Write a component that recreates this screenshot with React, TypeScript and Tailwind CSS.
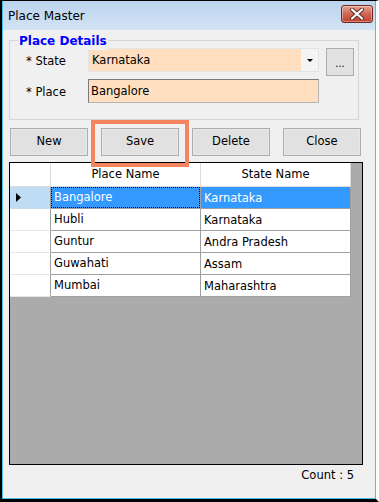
import React from 'react';

const font = { fontFamily: '"DejaVu Sans", Verdana, sans-serif' };

type Row = { place: string; state: string };

const rows: Row[] = [
  { place: 'Bangalore', state: 'Karnataka' },
  { place: 'Hubli', state: 'Karnataka' },
  { place: 'Guntur', state: 'Andra Pradesh' },
  { place: 'Guwahati', state: 'Assam' },
  { place: 'Mumbai', state: 'Maharashtra' },
];

const CloseButton = () => (
  <div className="flex h-[18px] w-[32px] items-center justify-center rounded-[3px] border border-[#6e2a22] bg-gradient-to-b from-[#e4a394] via-[#cf6553] to-[#c0412d] shadow-[inset_0_0_0_1px_rgba(255,255,255,0.35)]">
    <svg width="14" height="12" viewBox="0 0 14 12">
      <path
        d="M2 1.5 L12 10.5 M12 1.5 L2 10.5"
        stroke="#5a2a22"
        strokeWidth="4"
        strokeLinecap="round"
      />
      <path
        d="M2 1.5 L12 10.5 M12 1.5 L2 10.5"
        stroke="#ffffff"
        strokeWidth="2.2"
        strokeLinecap="round"
      />
    </svg>
  </div>
);

const Button = ({ label }: { label: string }) => (
  <button className="flex h-[28px] w-[78px] items-center justify-center border border-[#adadad] bg-[#e1e1e1] text-[11.5px] text-black shadow-[inset_0_0_0_1px_#e8e8e8]">
    {label}
  </button>
);

const RowPointer = () => (
  <svg width="5" height="9" viewBox="0 0 5 9">
    <path d="M0 0 L5 4.5 L0 9 Z" fill="#000" />
  </svg>
);

export default function App() {
  return (
    <div
      className="h-[502px] w-[379px] border-b-[3px] border-l-2 border-r-[3px] border-t border-black border-r-white bg-black text-black"
      style={font}
    >
      <div className="flex h-full flex-col border-b border-l border-r border-[#48bde8] bg-[#f0f0f0]">
        {/* title bar */}
        <div className="flex h-[29px] items-center justify-between bg-gradient-to-b from-[#bcd4ee] to-[#d3e3f4] pl-[5px] pr-[2px]">
          <span className="text-[12px]">Place Master</span>
          <div className="-mt-[4px]">
            <CloseButton />
          </div>
        </div>

        <div className="relative flex flex-1 flex-col pl-[6px]">
          {/* group box */}
          <div className="relative mt-[10px] w-[350px] border border-[#d5d5d5] pb-[16px] pt-[7px]">
            <span className="absolute -top-[9px] left-[8px] bg-[#f0f0f0] px-[1px] text-[12px] font-semibold text-[#0000ff]">
              Place Details
            </span>
            <div className="flex h-[28px] items-start">
              <div className="flex h-[24px] w-[78px] items-center pl-[16px] pt-[4px] text-[11.5px]">
                * State
              </div>
              <div className="flex h-[24px] w-[231px] border border-[#e3e3e3] bg-[#ffdfbf]">
                <div className="flex flex-1 items-center pl-[3px] pt-[2px] text-[11.5px]">
                  Karnataka
                </div>
                <div className="flex w-[17px] items-center justify-center bg-[#f4f4f4]">
                  <svg width="6" height="3" viewBox="0 0 6 3">
                    <path d="M0 0 L6 0 L3 3 Z" fill="#000" />
                  </svg>
                </div>
              </div>
              <button className="ml-[7px] flex h-[28px] w-[28px] items-center justify-center border border-[#adadad] bg-[#e1e1e1] pt-[2px] text-[10px]">
                ...
              </button>
            </div>
            <div className="mt-[3px] flex h-[24px] items-center">
              <div className="flex w-[78px] items-center pl-[16px] pt-[4px] text-[11.5px]">
                * Place
              </div>
              <div className="flex h-[24px] w-[231px] items-center border border-[#7a7a7a] border-b-[#b4b4b4] border-r-[#b4b4b4] bg-[#ffdfbf] pl-[2px] pt-[1px] text-[11.5px]">
                Bangalore
              </div>
            </div>
          </div>

          {/* buttons */}
          <div className="ml-[1px] mt-[8px] flex gap-[13px]">
            <Button label="New" />
            <Button label="Save" />
            <Button label="Delete" />
            <Button label="Close" />
          </div>

          {/* highlight around Save */}
          <div className="pointer-events-none absolute left-[88px] top-[90px] h-[47px] w-[98px] border-4 border-[#f4845f]" />

          {/* data grid */}
          <div className="mt-[6px] h-[303px] w-[354px] border border-black bg-[#ababab]">
            <div className="grid w-[341px] grid-cols-[41px_150px_150px] text-[11.5px]">
              <div className="h-[24px] border-b border-r border-[#dcdcdc] bg-white" />
              <div className="flex h-[24px] items-center justify-center border-b border-r border-[#dcdcdc] bg-white pt-[1px]">
                Place Name
              </div>
              <div className="flex h-[24px] items-center justify-center border-b border-r border-[#dcdcdc] bg-white pt-[1px]">
                State Name
              </div>
              {rows.map((r, i) => {
                const sel = i === 0;
                return (
                  <React.Fragment key={r.place}>
                    <div
                      className={
                        sel
                          ? 'flex h-[22px] items-center border-b border-r border-[#a0a0a0] border-b-[#c9ddef] bg-[#bfdcf5] pl-[6px]'
                          : 'flex h-[22px] items-center border-b border-r border-[#a0a0a0] border-b-[#e6e6e6] bg-white pl-[6px]'
                      }
                    >
                      {sel ? <RowPointer /> : null}
                    </div>
                    <div
                      className={
                        sel
                          ? 'flex h-[22px] items-center border-b border-r border-[#a0a0a0] bg-[#3399ff] text-white'
                          : 'flex h-[22px] items-center border-b border-r border-[#a0a0a0] bg-white pl-[3px]'
                      }
                    >
                      {sel ? (
                        <div className="flex h-full w-full items-center border border-dotted border-black pl-[2px]">
                          {r.place}
                        </div>
                      ) : (
                        r.place
                      )}
                    </div>
                    <div
                      className={
                        sel
                          ? 'flex h-[22px] items-center border-b border-r border-[#a0a0a0] bg-[#3399ff] pl-[3px] pt-[2px] text-white'
                          : 'flex h-[22px] items-center border-b border-r border-[#a0a0a0] bg-white pl-[3px] pt-[2px]'
                      }
                    >
                      {r.state}
                    </div>
                  </React.Fragment>
                );
              })}
            </div>
          </div>

          {/* count */}
          <div className="mt-[2px] flex w-[345px] justify-end text-[11.5px]">
            Count : 5
          </div>
        </div>
      </div>
    </div>
  );
}
